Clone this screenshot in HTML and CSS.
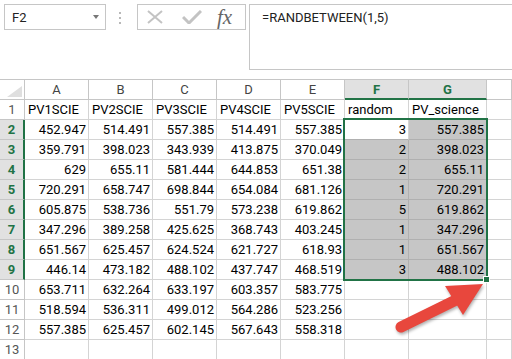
FILE: index.html
```
<!DOCTYPE html>
<html lang="en">
<head>
    <meta charset="UTF-8">
    <title>RANDBETWEEN</title>
    <link rel="stylesheet" href="styles.css">
</head>
<body>
<div class="page">
    <div class="toolbar">
        <div class="namebox"><span>F2</span><span class="caret"></span></div>
        <div class="grip"><i></i><i></i><i></i></div>
        <div class="fbtns">
            <svg class="icon-x" width="16" height="14" viewBox="0 0 16 14">
                <path d="M1 1L15 13M15 1L1 13" stroke="#c3c3c3" stroke-width="2" fill="none"></path>
            </svg>
            <svg class="icon-ok" width="20" height="14" viewBox="0 0 20 14">
                <path d="M1 7l6 6L19 1" stroke="#c3c3c3" stroke-width="3" fill="none"></path>
            </svg>
            <span class="fx">fx</span>
        </div>
        <div class="formula">=RANDBETWEEN(1,5)</div>
    </div>

    <div class="sheet">
        <div class="c corner"></div><div class="c ch">A</div><div class="c ch">B</div><div class="c ch">C</div><div class="c ch">D</div><div class="c ch">E</div><div class="c ch on">F</div><div class="c ch on">G</div><div class="c ch"></div>
        <div class="c rh">1</div><div class="c">PV1SCIE</div><div class="c">PV2SCIE</div><div class="c">PV3SCIE</div><div class="c">PV4SCIE</div><div class="c">PV5SCIE</div><div class="c">random</div><div class="c">PV_science</div><div class="c"></div>
        <div class="c rh on">2</div><div class="c n">452.947</div><div class="c n">514.491</div><div class="c n">557.385</div><div class="c n">514.491</div><div class="c n">557.385</div><div class="c n act">3</div><div class="c n sel">557.385</div><div class="c"></div>
        <div class="c rh on">3</div><div class="c n">359.791</div><div class="c n">398.023</div><div class="c n">343.939</div><div class="c n">413.875</div><div class="c n">370.049</div><div class="c n sel">2</div><div class="c n sel">398.023</div><div class="c"></div>
        <div class="c rh on">4</div><div class="c n">629</div><div class="c n">655.11</div><div class="c n">581.444</div><div class="c n">644.853</div><div class="c n">651.38</div><div class="c n sel">2</div><div class="c n sel">655.11</div><div class="c"></div>
        <div class="c rh on">5</div><div class="c n">720.291</div><div class="c n">658.747</div><div class="c n">698.844</div><div class="c n">654.084</div><div class="c n">681.126</div><div class="c n sel">1</div><div class="c n sel">720.291</div><div class="c"></div>
        <div class="c rh on">6</div><div class="c n">605.875</div><div class="c n">538.736</div><div class="c n">551.79</div><div class="c n">573.238</div><div class="c n">619.862</div><div class="c n sel">5</div><div class="c n sel">619.862</div><div class="c"></div>
        <div class="c rh on">7</div><div class="c n">347.296</div><div class="c n">389.258</div><div class="c n">425.625</div><div class="c n">368.743</div><div class="c n">403.245</div><div class="c n sel">1</div><div class="c n sel">347.296</div><div class="c"></div>
        <div class="c rh on">8</div><div class="c n">651.567</div><div class="c n">625.457</div><div class="c n">624.524</div><div class="c n">621.727</div><div class="c n">618.93</div><div class="c n sel">1</div><div class="c n sel">651.567</div><div class="c"></div>
        <div class="c rh on">9</div><div class="c n">446.14</div><div class="c n">473.182</div><div class="c n">488.102</div><div class="c n">437.747</div><div class="c n">468.519</div><div class="c n sel">3</div><div class="c n sel">488.102</div><div class="c"></div>
        <div class="c rh">10</div><div class="c n">653.711</div><div class="c n">632.264</div><div class="c n">633.197</div><div class="c n">603.357</div><div class="c n">583.775</div><div class="c"></div><div class="c"></div><div class="c"></div>
        <div class="c rh">11</div><div class="c n">518.594</div><div class="c n">536.311</div><div class="c n">499.012</div><div class="c n">564.286</div><div class="c n">523.256</div><div class="c"></div><div class="c"></div><div class="c"></div>
        <div class="c rh">12</div><div class="c n">557.385</div><div class="c n">625.457</div><div class="c n">602.145</div><div class="c n">567.643</div><div class="c n">558.318</div><div class="c"></div><div class="c"></div><div class="c"></div>
        <div class="c rh">13</div><div class="c"></div><div class="c"></div><div class="c"></div><div class="c"></div><div class="c"></div><div class="c"></div><div class="c"></div><div class="c"></div>

        <div class="selection"><span class="handle"></span></div>
    </div>

    <svg class="arrow" width="512" height="359" viewBox="0 0 512 359">
        <line x1="401" y1="327" x2="458" y2="299" stroke="#e8473d" stroke-width="11" stroke-linecap="round"></line>
        <polygon points="445,286 483,284 463,315" fill="#e8473d"></polygon>
    </svg>
</div>
</body>
</html>
```

FILE: styles.css
```
html, body {
    margin: 0;
    padding: 0;
    background: #ffffff;
}

.page {
    position: relative;
    width: 512px;
    height: 359px;
    overflow: hidden;
    font-family: Roboto, "Liberation Sans", sans-serif;
    font-size: 13px;
    color: #000000;
}

/* formula bar */
.toolbar {
    display: flex;
    align-items: flex-start;
    box-sizing: border-box;
    height: 79px;
    padding-top: 4px;
}

.namebox {
    display: flex;
    align-items: center;
    justify-content: space-between;
    box-sizing: border-box;
    width: 102px;
    height: 26px;
    margin-left: 4px;
    padding: 0 6px 0 7px;
    border: 1px solid #c6c6c6;
    color: #222222;
}

.caret {
    width: 0;
    height: 0;
    border-top: 4px solid #777777;
    border-right: 3.5px solid transparent;
    border-left: 3.5px solid transparent;
}

.grip {
    display: flex;
    flex-direction: column;
    gap: 3px;
    box-sizing: border-box;
    width: 31px;
    padding: 8px 0 0 13px;
}

.grip i {
    width: 2px;
    height: 2px;
    background: #b8b8b8;
}

.fbtns {
    display: flex;
    align-items: center;
    box-sizing: border-box;
    width: 109px;
    height: 26px;
    padding-left: 9px;
    border: 1px solid #c6c6c6;
}

.icon-ok {
    margin-left: 19px;
}

.fx {
    margin-left: 15px;
    font-family: "Liberation Serif", serif;
    font-size: 21px;
    font-style: italic;
    line-height: 20px;
    color: #666666;
}

.formula {
    flex: 1;
    box-sizing: border-box;
    height: 66px;
    margin-left: 3px;
    padding-left: 12px;
    border: 1px solid #c6c6c6;
    border-right: none;
    line-height: 25px;
    color: #222222;
}

/* grid */
.sheet {
    position: relative;
    display: grid;
    grid-template-columns: 25px repeat(6, 64px) 78px 1fr;
    grid-template-rows: 21px repeat(13, 20px);
}

.c {
    box-sizing: border-box;
    padding: 0 3px;
    border-right: 1px solid #d4d4d4;
    border-bottom: 1px solid #d4d4d4;
    line-height: 19px;
    white-space: nowrap;
    overflow: hidden;
}

.n {
    padding-right: 2px;
    text-align: right;
}

.ch,
.corner {
    border-top: 1px solid #c6c6c6;
    border-right-color: #c6c6c6;
    border-bottom-color: #c6c6c6;
    text-align: center;
    color: #444444;
}

.corner {
    position: relative;
}

.corner::after {
    content: "";
    position: absolute;
    right: 2px;
    bottom: 2px;
    width: 15px;
    height: 11px;
    background: #dfdfdf;
    clip-path: polygon(100% 0, 100% 100%, 0 100%);
}

.ch.on {
    border-bottom: 2px solid #217346;
    background: #e1e1e1;
    color: #217346;
    font-weight: bold;
}

.rh {
    padding: 0;
    border-right-color: #c6c6c6;
    border-bottom-color: #c6c6c6;
    text-align: center;
    color: #555555;
}

.rh.on {
    border-right: 2px solid #217346;
    background: #e1e1e1;
    color: #217346;
    font-weight: bold;
}

.sel {
    border-right-color: #b0b0b0;
    border-bottom-color: #b0b0b0;
    background: #c6c6c6;
}

.act {
    border-bottom-color: #b0b0b0;
}

/* F2:G9 outline, drawn over the cells */
.selection {
    position: absolute;
    top: 39px;
    left: 343px;
    box-sizing: border-box;
    width: 145px;
    height: 163px;
    border: 2px solid #217346;
}

.handle {
    position: absolute;
    right: -4px;
    bottom: -4px;
    width: 5px;
    height: 5px;
    border: 1px solid #ffffff;
    background: #217346;
}

.arrow {
    position: absolute;
    top: 0;
    left: 0;
    pointer-events: none;
    filter: drop-shadow(1px 2px 1.5px rgba(0, 0, 0, 0.3));
}
```
